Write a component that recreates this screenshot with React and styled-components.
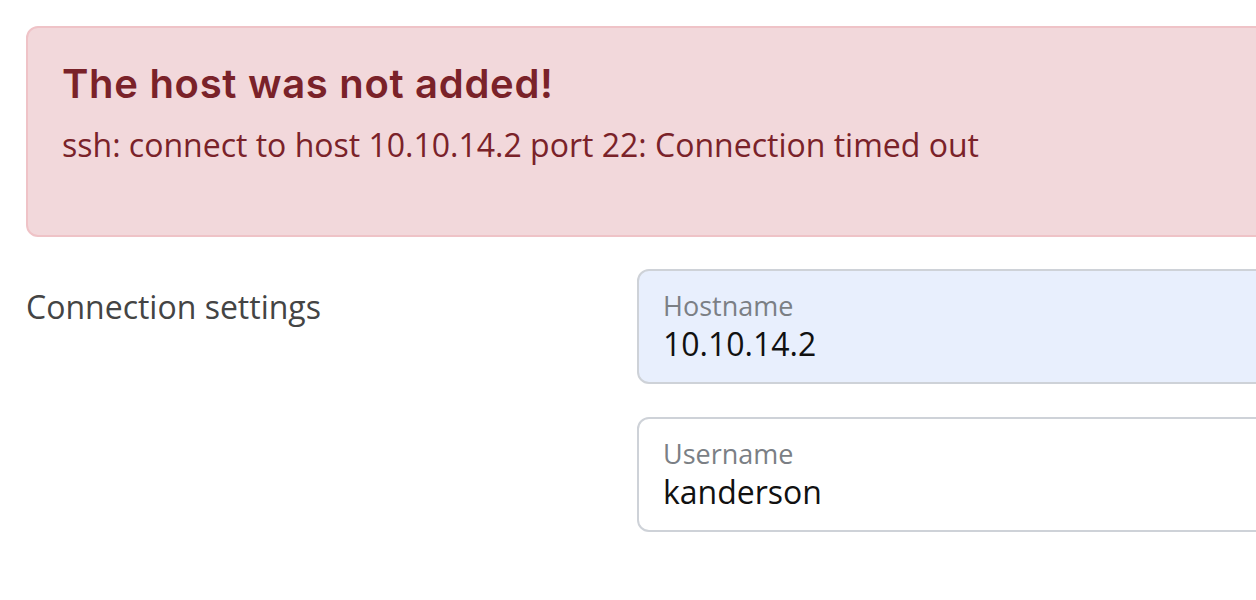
import React from "react";
import styled, { createGlobalStyle } from "styled-components";

const Global = createGlobalStyle`
  html, body { margin: 0; padding: 0; background: #fff; overflow: hidden; }
  body { font-family: "Open Sans", "Noto Sans", sans-serif; }
`;

const Page = styled.div`
  width: 1500px;
  padding: 26px 0 0 26px;
  box-sizing: border-box;
`;

const Alert = styled.div`
  box-sizing: border-box;
  height: 211px;
  background: #f2d8db;
  border: 2px solid #efc3c7;
  border-radius: 12px;
  padding: 32px 34px;
  color: #7a2229;
`;

const AlertHeading = styled.h4`
  margin: 0 0 15px 0;
  font-family: "Inter", sans-serif;
  font-weight: 600;
  font-size: 40px;
  line-height: 1.2;
  letter-spacing: 0.7px;
`;

const AlertText = styled.p`
  margin: 0;
  font-size: 32px;
  line-height: 1.4;
`;

const FormRow = styled.div`
  display: grid;
  grid-template-columns: 611px 1fr;
  margin-top: 32px;
`;

const SectionLabel = styled.div`
  font-size: 32px;
  color: #444;
  padding-top: 17px;
  line-height: 1.3;
`;

const Fields = styled.div`
  display: flex;
  flex-direction: column;
  gap: 33px;
`;

const Field = styled.div`
  box-sizing: border-box;
  height: 115px;
  border: 2px solid #ced2d8;
  border-radius: 12px;
  background: ${(p) => (p.$filled ? "#e8effd" : "#fff")};
  padding: 17px 24px 0;
  display: flex;
  flex-direction: column;
`;

const FieldLabel = styled.span`
  font-size: 27px;
  color: #7b7f85;
  line-height: 1.3;
`;

const FieldValue = styled.span`
  font-size: 32px;
  color: #111;
  line-height: 1.3;
`;

export default function App() {
  return (
    <>
      <Global />
      <Page>
        <Alert>
          <AlertHeading>The host was not added!</AlertHeading>
          <AlertText>ssh: connect to host 10.10.14.2 port 22: Connection timed out</AlertText>
        </Alert>
        <FormRow>
          <SectionLabel>Connection settings</SectionLabel>
          <Fields>
            <Field $filled>
              <FieldLabel>Hostname</FieldLabel>
              <FieldValue>10.10.14.2</FieldValue>
            </Field>
            <Field>
              <FieldLabel>Username</FieldLabel>
              <FieldValue>kanderson</FieldValue>
            </Field>
          </Fields>
        </FormRow>
      </Page>
    </>
  );
}
